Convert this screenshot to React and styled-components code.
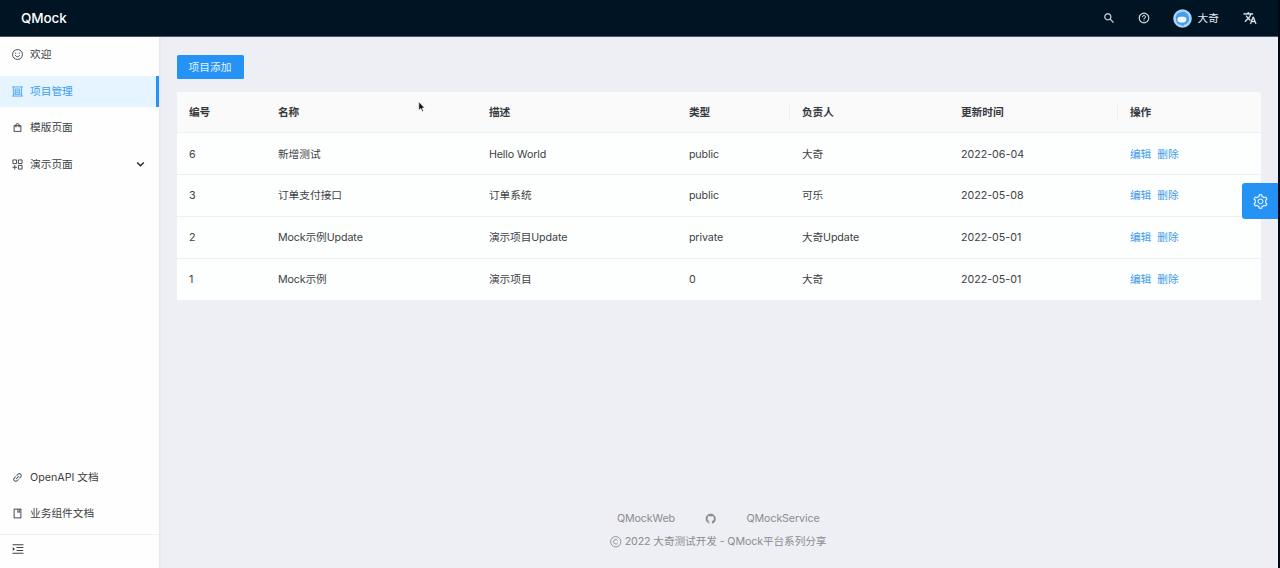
import React from "react";
import styled, { createGlobalStyle } from "styled-components";
import {
  AiOutlineShopping, AiOutlineLink, AiOutlineBook, AiOutlineMenuUnfold,
  AiOutlineSearch, AiOutlineQuestionCircle, AiOutlineSetting, AiOutlineGithub,
} from "react-icons/ai";

const Global = createGlobalStyle`
  * { box-sizing: border-box; }
  body {
    margin: 0; background: #eeeff4; color: #404245; overflow: hidden;
    font: 10.7px/17px Inter, "Noto Sans CJK SC", sans-serif;
  }
`;
const Page = styled.div`
  position: relative; display: flex; flex-direction: column;
  height: 568px; border-right: 2px solid #000814;
`;
const Header = styled.header`
  display: flex; align-items: center; justify-content: space-between;
  height: 37px; flex: none; padding: 0 21px 0 21px; background: #001424; color: #e8ebee;
  border-bottom: 1px solid #4d5966;
`;
const Logo = styled.div`font-size: 13.5px; font-weight: 500; color: #fff; letter-spacing: -0.1px;`;
const Tools = styled.div`display: flex; align-items: center; svg { display: block; }`;
const Tool = styled.div`display: flex; margin-right: ${(p) => p.$gap}px; font-size: ${(p) => p.$size || 12}px;`;
const User = styled.div`display: flex; align-items: center; gap: 6px; margin-right: 24px;`;
const Body = styled.div`display: flex; flex: 1; min-height: 0;`;
const Sider = styled.aside`
  display: flex; flex-direction: column; width: 158.5px; flex: none; background: #fefefe;
  box-shadow: 1px 0 3px rgba(30, 40, 60, 0.05);
`;
const Menu = styled.nav`
  display: flex; flex-direction: column; gap: 6px; padding-top: 2.7px;
  margin-top: ${(p) => (p.$bottom ? "auto" : 0)};
  margin-bottom: ${(p) => (p.$bottom ? "5px" : 0)};
`;
const MenuItem = styled.div`
  display: flex; align-items: center; gap: 7px; height: 30.5px; padding: 0 12px;
  color: ${(p) => (p.$active ? "#3a9cf4" : "#3c3e42")};
  background: ${(p) => (p.$active ? "#e5f4fe" : "transparent")};
  border-right: ${(p) => (p.$active ? "3px solid #2793f5" : "0")};
  svg { font-size: 11px; flex: none; stroke-width: 12; }
  svg:last-child:not(:first-child) { margin-left: auto; margin-right: 1.5px; }
`;
const Collapse = styled.div`
  height: 34px; border-top: 1px solid #f0f0f2; padding: 7px 11.4px; font-size: 14px;
  svg { display: block; }
`;
const Main = styled.main`
  display: flex; flex-direction: column; flex: 1; align-items: flex-start;
  padding: 18px 17px 0 18px;
`;
const AddButton = styled.button`
  width: 67px; height: 24px; padding: 0; border: 0; border-radius: 1.5px;
  background: #2593f6; color: #e6f3fe; font: inherit; margin-bottom: 12.7px;
`;
const Table = styled.div`width: 1084.5px; background: #fdfefe;`;
const Row = styled.div`
  display: grid; grid-template-columns: 89px 211px 200px 113px 159px 169px 1fr;
  align-items: center; height: ${(p) => (p.$head ? 41.7 : p.$last ? 40.8 : 41.8)}px;
  padding-top: 0.6px;
  border-bottom: ${(p) => (p.$last ? 0 : 1)}px solid #efeff1;
  background: ${(p) => (p.$head ? "#fafafb" : "transparent")};
  font-weight: ${(p) => (p.$head ? 600 : 400)};
  color: ${(p) => (p.$head ? "#36383b" : "#404245")};
`;
const Cell = styled.div`
  display: flex; align-items: center; gap: 6px; height: 15px; padding-left: 12.4px;
  border-left: 1px ${(p) => (p.$divider ? "dotted #e4e4e8" : "solid transparent")};
  margin-left: -1px; letter-spacing: ${(p) => (p.$latin ? "-0.1px" : "0")};
`;
const Action = styled.a`color: #3d9bed;`;
const Footer = styled.footer`
  display: flex; flex-direction: column; align-items: center; gap: 6px;
  align-self: center; margin-top: auto; margin-bottom: 17.6px; color: #8b8c90;
  letter-spacing: -0.12px;
`;
const Links = styled.div`
  display: flex; align-items: center; gap: 30px; margin-right: 1px;
  svg { font-size: 11.5px; }
`;
const Copy = styled.div`
  display: flex; align-items: center; gap: 3px; margin-right: 1px; white-space: pre;
  svg { font-size: 11.5px; }
`;
const SettingTab = styled.div`
  position: absolute; right: 0; top: 183px; width: 36px; height: 36px;
  display: flex; align-items: center; justify-content: center;
  background: #2593f6; color: #e4f2fe; border-radius: 3px 0 0 3px; font-size: 17px;
`;
const Pointer = styled.svg`position: absolute; left: 418px; top: 101px; width: 7px; height: 12px;`;

const LineIcon = ({ d, weight = 1 }) => (
  <svg width="1em" height="1em" viewBox="0 0 12 12" fill="none" stroke="currentColor">
    <path strokeWidth={weight} d={d} />
  </svg>
);
const SmileIcon = () => (
  <LineIcon d="M6 .6a5.400 5.400 0 1 1 0 10.800A5.400 5.400 0 0 1 6 .6zM4 4v1.200M8 4v1.200M3.600 6.700c.8 2.300 4 2.300 4.800 0" />
);
const ProjectIcon = () => (
  <LineIcon weight={0.9} d="M.2 1h11.600M.2 11h11.600M1.500 1v10M10.500 1v10M3.500 3.300h5M3.500 5.300h5M3.500 7.300h5M2.500 9.200h7M3.500 3v6M8.500 3v6" />
);
const BlocksIcon = () => (
  <LineIcon d="M1 1h4v4h-4zM7 1h4v4h-4zM7 7h4v4h-4zM3 6.500v5M.5 9h5" />
);
const CopyrightIcon = () => (
  <LineIcon weight={0.95} d="M6 .6a5.400 5.400 0 1 1 0 10.800A5.400 5.400 0 0 1 6 .6zM8.100 4.700a2.400 2.400 0 1 0 0 2.600" />
);
const ArrowIcon = () => (
  <svg width="9" height="9" viewBox="0 0 9 9" fill="none" stroke="#25272a">
    <path strokeWidth="1.5" d="M1.200 2.500 4.500 5.700l3.300-3.200" />
  </svg>
);
const TranslateIcon = () => (
  <svg width="1em" height="1em" viewBox="0 0 24 24" fill="currentColor" stroke="currentColor" strokeWidth=".4">
    <path d="m12.870 15.070-2.540-2.510.03-.03A17.520 17.520 0 0 0 14.070 6H17V4h-7V2H8v2H1v1.990h11.170C11.500 7.920 10.440 9.750 9 11.350 8.070 10.320 7.300 9.190 6.690 8h-2c.73 1.630 1.730 3.170 2.980 4.560l-5.090 5.020L4 19l5-5 3.110 3.110.76-2.040zM18.500 10h-2L12 22h2l1.120-3h4.750L21 22h2l-4.500-12zm-2.620 7 1.620-4.330L19.120 17h-3.240z" />
  </svg>
);
const Avatar = () => (
  <svg width="19" height="19" viewBox="0 0 19 19">
    <circle cx="9.5" cy="9.5" r="9.3" fill="#a9d4fa" />
    <path d="M3 11C2 5.500 5.500 3 7.500 3.500 9 2 15 2.500 16 9c.5 3-1.500 6-4.500 6.500L10 17.500 8.500 16C5.500 16 3.500 14 3 11Z" fill="#459ee9" />
    <rect x="4.5" y="7.8" width="8.8" height="5.6" rx="2.8" fill="#f5faff" />
    <path d="M7.300 9.800v.8M10.500 9.800v.8" stroke="#a4cff5" strokeWidth=".9" />
  </svg>
);

const rows = [
  ["6", "新增测试", "Hello World", "public", "大奇", "2022-06-04"],
  ["3", "订单支付接口", "订单系统", "public", "可乐", "2022-05-08"],
  ["2", "Mock示例Update", "演示项目Update", "private", "大奇Update", "2022-05-01"],
  ["1", "Mock示例", "演示项目", "0", "大奇", "2022-05-01"],
];
const heads = ["编号", "名称", "描述", "类型", "负责人", "更新时间", "操作"];

export default function App() {
  return (
    <Page>
      <Global />
      <Header>
        <Logo>QMock</Logo>
        <Tools>
          <Tool $gap={23}><AiOutlineSearch strokeWidth="20" /></Tool>
          <Tool $gap={23}><AiOutlineQuestionCircle strokeWidth="12" /></Tool>
          <User><Avatar /><span>大奇</span></User>
          <Tool $gap={0} $size={14}><TranslateIcon /></Tool>
        </Tools>
      </Header>
      <Body>
        <Sider>
          <Menu>
            <MenuItem><SmileIcon />欢迎</MenuItem>
            <MenuItem $active><ProjectIcon />项目管理</MenuItem>
            <MenuItem><AiOutlineShopping />模版页面</MenuItem>
            <MenuItem><BlocksIcon /><span>演示页面</span><ArrowIcon /></MenuItem>
          </Menu>
          <Menu $bottom>
            <MenuItem><AiOutlineLink />OpenAPI 文档</MenuItem>
            <MenuItem><AiOutlineBook />业务组件文档</MenuItem>
          </Menu>
          <Collapse><AiOutlineMenuUnfold /></Collapse>
        </Sider>
        <Main>
          <AddButton>项目添加</AddButton>
          <Table>
            <Row $head>
              {heads.map((h, i) => <Cell key={h} $divider={i === 4 || i === 6}>{h}</Cell>)}
            </Row>
            {rows.map((r, i) => (
              <Row key={r[0]} $last={i === rows.length - 1}>
                {r.map((c, j) => <Cell key={j} $latin={j < 5 && /[a-z]/.test(c)}>{c}</Cell>)}
                <Cell><Action>编辑</Action><Action>删除</Action></Cell>
              </Row>
            ))}
          </Table>
          <Footer>
            <Links><span>QMockWeb</span><AiOutlineGithub /><span>QMockService</span></Links>
            <Copy><CopyrightIcon />2022 大奇测试开发 - QMock平台系列分享</Copy>
          </Footer>
        </Main>
      </Body>
      <SettingTab><AiOutlineSetting /></SettingTab>
      <Pointer viewBox="0 0 7 12">
        <path d="M.8.8v8.400l2-1.700 1.300 3 1.300-.6-1.300-2.900h2.500z" fill="#111" stroke="#fff" strokeWidth=".6" />
      </Pointer>
    </Page>
  );
}
